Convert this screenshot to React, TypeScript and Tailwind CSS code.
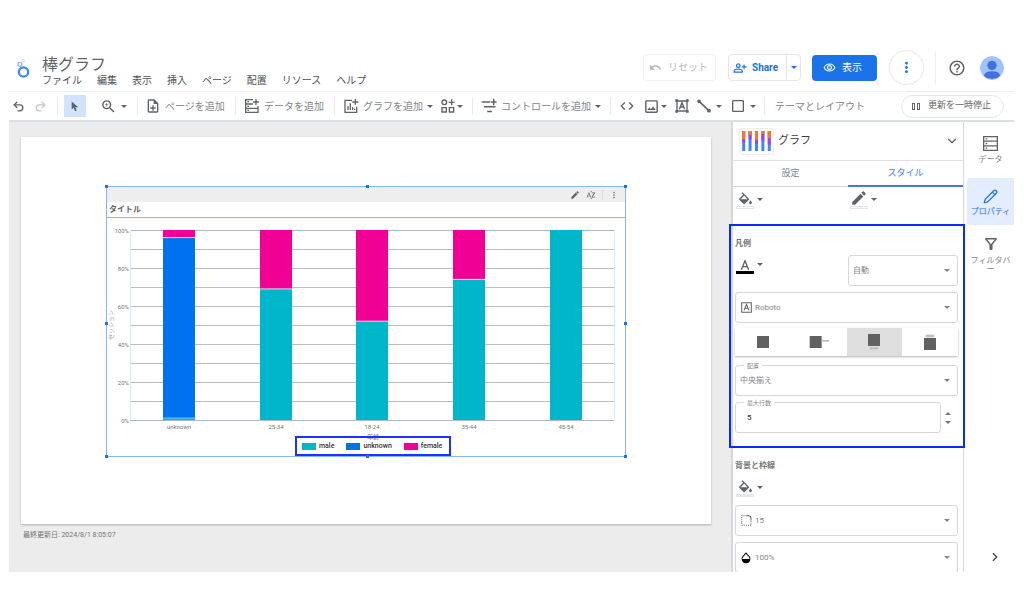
import React, { useState } from 'react';
import {
  MdCheckBoxOutlineBlank,
  MdCode,
  MdEdit,
  MdHelpOutline,
  MdMoreVert,
  MdOutlineFilterAlt,
  MdOutlineImage,
  MdOutlineNoteAdd,
  MdOutlinePersonAddAlt,
  MdOutlineRemoveRedEye,
  MdOutlineZoomIn,
  MdSortByAlpha,
  MdUndo,
} from 'react-icons/md';
import { ChevronDown, ChevronRight, Pencil, Redo2, Undo2 } from 'lucide-react';

const menus = ['ファイル', '編集', '表示', '挿入', 'ページ', '配置', 'リソース', 'ヘルプ'];

const PINK = '#f10096';
const CYAN = '#00b6cb';
const BLUE = '#0072f0';

// shares in percent, stacked from the bottom
const bars = [
  { label: 'unknown', male: 1, unknown: 95, female: 4 },
  { label: '25-34', male: 69, unknown: 0, female: 31 },
  { label: '18-24', male: 52, unknown: 0, female: 48 },
  { label: '35-44', male: 74, unknown: 0, female: 26 },
  { label: '45-54', male: 100, unknown: 0, female: 0 },
];

const Caret = () => (
  <svg viewBox="0 0 6 3" className="w-[6px] h-[3px] shrink-0 pointer-events-none" fill="currentColor">
    <path d="M0 0h6L3 3z" />
  </svg>
);

const Divider = () => <div className="w-px h-[18px] bg-[#e8eaed] shrink-0" />;

const Logo = () => (
  <svg viewBox="54 54 38 60" className="w-[13px] h-5 shrink-0" fill="none">
    <circle cx="73" cy="96" r="14" stroke="#4285f4" strokeWidth="7" />
    <circle cx="62" cy="73" r="6" stroke="#8ab4f8" strokeWidth="4" />
    <circle cx="72" cy="62" r="4" stroke="#c6dafc" strokeWidth="3" />
  </svg>
);

const DataAddIcon = () => (
  <svg viewBox="0 0 48 48" className="w-4 h-4 shrink-0" fill="none" stroke="currentColor" strokeWidth="4">
    <path d="M27 5H5v38h37V31H5M5 18h22M27 31H42V24M36 3v18M27 12h18M10 11h5M10 25h5M10 37h5" />
  </svg>
);

const ChartAddIcon = () => (
  <svg viewBox="0 0 48 48" className="w-4 h-4 shrink-0" fill="none" stroke="currentColor" strokeWidth="4">
    <path d="M27 7H6v36h35V26M37 3v17M28 12h18M15 36V24M22 36V16M29 36v-9M35 36v-4" />
  </svg>
);

const CommunityIcon = () => (
  <svg viewBox="0 0 42 42" className="w-3.5 h-3.5 shrink-0" fill="none" stroke="currentColor" strokeWidth="4">
    <circle cx="10" cy="10" r="7" />
    <path d="M32 1v18M23 10h18M3 26h13v13H3zM25 26h13v13H25z" />
  </svg>
);

const ControlAddIcon = () => (
  <svg viewBox="0 0 44 44" className="w-4 h-4 shrink-0" fill="none" stroke="currentColor" strokeWidth="4">
    <path d="M2 11h23M8 24h32M17 37h13M35 2v18M27 11h16" />
  </svg>
);

const TextBoxIcon = () => (
  <svg viewBox="0 0 42 42" className="w-3.5 h-3.5 shrink-0" fill="none" stroke="currentColor" strokeWidth="4">
    <path d="M6 6h30v30H6zM13 31l8-20 8 20M16 24h10" />
    <path fill="currentColor" stroke="none" d="M1 1h8v8H1zM33 1h8v8h-8zM1 33h8v8H1zM33 33h8v8h-8z" />
  </svg>
);

const LineIcon = () => (
  <svg viewBox="0 0 42 42" className="w-3.5 h-3.5 shrink-0" stroke="currentColor" strokeWidth="5">
    <path d="M6 7l30 28" />
    <circle cx="6" cy="7" r="3" />
    <circle cx="36" cy="35" r="3" />
  </svg>
);

const BucketIcon = () => (
  <svg viewBox="0 0 24 18" className="w-[17px] h-[13px]" fill="currentColor">
    <path d="M16.56 8.94L7.62 0 6.21 1.41l2.38 2.38-5.15 5.15a1.49 1.49 0 0 0 0 2.12l5.5 5.5c.29.29.68.44 1.06.44s.77-.15 1.06-.44l5.5-5.5c.59-.58.59-1.53 0-2.12zM5.21 10L10 5.21 14.79 10H5.21zM19 11.5s-2 2.17-2 3.5c0 1.1.9 2 2 2s2-.9 2-2c0-1.33-2-3.5-2-3.5z" />
  </svg>
);

const FontIcon = () => (
  <svg viewBox="0 0 32 32" className="w-[11px] h-[11px] shrink-0" fill="none" stroke="currentColor" strokeWidth="3">
    <path d="M2 2h28v28H2z" />
    <path d="M9 24l7-17 7 17M12 18h8" />
  </svg>
);

const CornerIcon = () => (
  <svg viewBox="0 0 32 32" className="w-[11px] h-[11px] shrink-0" fill="none" stroke="currentColor" strokeWidth="3">
    <path d="M16 2h6q7 0 7 8v6" />
    <path strokeDasharray="3 3" d="M16 2H2v28h27V16" />
  </svg>
);

const OpacityIcon = () => (
  <svg viewBox="0 0 28 34" className="w-[10px] h-3 shrink-0 text-black">
    <path d="M14 3l8 9a11 11 0 1 1-16 0z" fill="none" stroke="currentColor" strokeWidth="3" />
    <path d="M3 20h22a11 11 0 0 1-22 0z" fill="currentColor" />
  </svg>
);

const DataIcon = () => (
  <svg viewBox="0 0 46 46" className="w-[15px] h-[15px]" fill="none" stroke="currentColor" strokeWidth="4">
    <path d="M2 2h42v42H2zM2 16h42M2 30h42M8 9h5M8 23h5M8 37h5" />
  </svg>
);

const ThumbIcon = () => {
  const splits = [
    [24, 34],
    [11, 26],
    [26, 39],
    [9, 29],
    [21, 41],
  ];
  return (
    <svg viewBox="0 0 86 60" className="w-[29px] h-5">
      {splits.map(([a, b], i) => (
        <g key={i}>
          <rect x={i * 19.2} width="9" height="60" fill="#4285f4" />
          <rect x={i * 19.2} width="9" height={b} fill="#a142f4" />
          <rect x={i * 19.2} width="9" height={a} fill="#fa7b17" />
        </g>
      ))}
    </svg>
  );
};

const Header = () => (
  <header className="flex h-12 shrink-0 border-b border-[#eceef0] pr-2.5">
    <div className="pl-2 pt-3.5">
      <Logo />
    </div>
    <div className="pl-3 pt-[11px] flex-1">
      <h1 className="text-base leading-5 text-[#5f6368]">棒グラフ</h1>
      <nav className="flex gap-[15px] text-[10px] leading-3 text-[#4d5156]">
        {menus.map((m) => (
          <button key={m}>{m}</button>
        ))}
      </nav>
    </div>
    <div className="flex items-center text-[10px]">
      <button className="flex items-center w-[73px] h-[27px] pl-[5px] gap-1.5 border border-[#eef0f2] rounded-sm text-[#b4b7ba]">
        <MdUndo size={13} />
        リセット
      </button>
      <div className="flex items-center ml-3 w-[73px] h-[27px] border border-[#e4e7ea] rounded-sm text-[#1a73e8]">
        <button className="flex items-center h-full gap-[5px] pl-1 w-[57px] font-bold">
          <MdOutlinePersonAddAlt size={14} />
          Share
        </button>
        <button aria-label="共有オプション" className="flex items-center justify-center h-full flex-1 border-l border-[#e4e7ea]">
          <Caret />
        </button>
      </div>
      <button className="flex items-center ml-[11px] w-[65px] h-[26px] pl-[11px] gap-1.5 rounded-sm bg-[#1a73e8] text-white">
        <MdOutlineRemoveRedEye size={13} />
        表示
      </button>
      <button aria-label="その他" className="flex items-center justify-center ml-3 w-[35px] h-[35px] rounded-full border border-[#e4e7ea] text-[#1a73e8]">
        <MdMoreVert size={17} />
      </button>
      <div className="ml-[11px] w-px h-8 bg-[#eceef0]" />
      <button aria-label="ヘルプ" className="ml-3 text-[#5f6368]">
        <MdHelpOutline size={18} />
      </button>
      <svg viewBox="0 0 72 72" className="ml-3.5 w-6 h-6 rounded-full">
        <circle cx="36" cy="36" r="36" fill="#a0c3ff" />
        <circle cx="36" cy="28" r="14" fill="#4071dd" />
        <path d="M12 60q0-14 24-14t24 14q-10 9-24 9t-24-9z" fill="#4071dd" />
      </svg>
    </div>
  </header>
);

const Toolbar = () => (
  <div className="flex items-center h-[30px] shrink-0 border-b-2 border-[#dadfe2] pr-2.5 text-[10px] text-[#5f6368] whitespace-nowrap">
    <div className="flex w-12 items-center">
      <button aria-label="元に戻す" className="w-[18px] flex justify-center">
        <Undo2 size={13} strokeWidth={2.5} />
      </button>
      <button aria-label="やり直し" className="w-[26px] flex justify-center text-[#c4c7ca]">
        <Redo2 size={13} strokeWidth={2.5} />
      </button>
    </div>
    <Divider />
    <div className="px-1.5">
      <button aria-label="選択" className="flex items-center justify-center w-[22px] h-[22px] bg-[#d2e3fc]">
        <svg viewBox="0 0 24 32" className="w-[8px] h-[11px]" fill="currentColor">
          <path d="M2 1v24l6-5 4 10 5-2-4-10h9z" />
        </svg>
      </button>
    </div>
    <button aria-label="ズーム" className="flex items-center w-[45px] pl-2 gap-1">
      <MdOutlineZoomIn size={17} />
      <Caret />
    </button>
    <Divider />
    <button className="flex items-center w-[97px] pl-[7px] gap-1 text-[#80868b]">
      <MdOutlineNoteAdd size={16} className="text-[#5f6368]" />
      ページを追加
    </button>
    <Divider />
    <button className="flex items-center w-[98px] pl-2 gap-1 text-[#80868b]">
      <span className="text-[#5f6368]">
        <DataAddIcon />
      </span>
      データを追加
    </button>
    <Divider />
    <div className="flex items-center w-[137px] pl-2 gap-2">
      <button className="flex items-center gap-1">
        <ChartAddIcon />
        <span className="text-[#80868b]">グラフを追加</span>
        <Caret />
      </button>
      <button aria-label="コミュニティ ビジュアリゼーション" className="flex items-center gap-0.5">
        <CommunityIcon />
        <Caret />
      </button>
    </div>
    <Divider />
    <button className="flex items-center w-[137px] pl-2 gap-1">
      <ControlAddIcon />
      <span className="text-[#80868b]">コントロールを追加</span>
      <Caret />
    </button>
    <Divider />
    <div className="flex items-center w-[153px] pl-2 gap-2">
      <button aria-label="URL の埋め込み">
        <MdCode size={16} />
      </button>
      <button aria-label="画像" className="flex items-center gap-px">
        <MdOutlineImage size={17} />
        <Caret />
      </button>
      <button aria-label="テキスト">
        <TextBoxIcon />
      </button>
      <button aria-label="線" className="flex items-center gap-[5px]">
        <LineIcon />
        <Caret />
      </button>
      <button aria-label="図形" className="flex items-center gap-1">
        <MdCheckBoxOutlineBlank size={16} />
        <Caret />
      </button>
    </div>
    <Divider />
    <button className="pl-2.5 text-[#80868b]">テーマとレイアウト</button>
    <button className="flex items-center ml-auto h-[23px] pl-[10px] pr-3 gap-2 border border-[#e4e7ea] rounded-full text-[9px]">
      <span className="flex gap-0.5">
        <span className="w-[3px] h-[7px] border border-current" />
        <span className="w-[3px] h-[7px] border border-current" />
      </span>
      更新を一時停止
    </button>
  </div>
);

const Plot = () => (
  <svg viewBox="1 0 518 238" className="block w-full" fontSize="6" fill="#777">
    {Array.from({ length: 11 }, (_, i) => (
      <path key={i} d={`M24 ${12.5 + i * 19}H508`} stroke={i % 10 === 0 ? '#a9b8cf' : '#bdbdbd'} />
    ))}
    <path d="M24.5 12V202M508.5 12V202" stroke="#dbe7fb" />
    {[100, 80, 60, 40, 20, 0].map((v, i) => (
      <text key={v} x="23" y={14.5 + i * 38} textAnchor="end">
        {v}%
      </text>
    ))}
    {bars.map((b, i) => {
      const x = 57 + Math.round(i * 96.7);
      const top = 12 + b.female * 1.9;
      const mid = top + b.unknown * 1.9;
      return (
        <g key={b.label}>
          <rect x={x} y="12" width="32" height="190" fill={CYAN} />
          <rect x={x} y="12" width="32" height={mid - 12} fill={BLUE} />
          <rect x={x} y="12" width="32" height={top - 12} fill={PINK} />
          {b.female > 0 && <path d={`M${x} ${top}h32`} stroke="#f1d3ea" />}
          {b.unknown > 0 && <path d={`M${x} ${mid}h32`} stroke="#7fc4ee" />}
          <text x={x + 16} y="211" textAnchor="middle">
            {b.label}
          </text>
        </g>
      );
    })}
    <text transform="translate(7 107) rotate(-90)" textAnchor="middle" fill="#999">
      セッション
    </text>
    <text x="267" y="221" textAnchor="middle">
      年齢
    </text>
  </svg>
);

const handles = [
  'left-[-2px] top-[-2px]',
  'left-1/2 top-[-2px]',
  'right-[-2px] top-[-2px]',
  'left-[-2px] top-1/2',
  'right-[-2px] top-1/2',
  'left-[-2px] bottom-[-2px]',
  'left-1/2 bottom-[-2px]',
  'right-[-2px] bottom-[-2px]',
];

const legend = [
  { name: 'male', color: 'bg-[#00b6cb]' },
  { name: 'unknown', color: 'bg-[#0072f0]' },
  { name: 'female', color: 'bg-[#f10096]' },
];

const ChartCard = () => (
  <div className="relative border border-[#8ab4f8]">
    <div className="flex items-center justify-end h-[15px] pr-1.5 bg-[#eeeeee] text-[#5f6368]">
      <MdEdit size={10} />
      <MdSortByAlpha size={10} className="ml-1.5" />
      <div className="ml-1.5 mr-1.5 w-px h-2.5 bg-[#dddddd]" />
      <MdMoreVert size={10} />
    </div>
    <h2 className="h-4 pl-0.5 text-[8px] leading-4 font-bold text-[#5f6368] border-b border-[#8ab4f8]">タイトル</h2>
    <Plot />
    <ul className="absolute bottom-0 left-[188px] flex items-center gap-3 h-5 pl-[5px] pr-[7px] border-2 border-[#1a33ff] text-[7px] font-medium text-[#333]">
      {legend.map((l) => (
        <li key={l.name} className="flex items-center gap-[3px]">
          <span className={`w-3.5 h-[7px] ${l.color}`} />
          {l.name}
        </li>
      ))}
    </ul>
    {handles.map((h) => (
      <span key={h} className={`absolute w-[3px] h-[3px] bg-[#1a73e8] ${h}`} />
    ))}
  </div>
);

type FieldProps = {
  label: string;
  value: string;
  icon?: React.ReactNode;
  floating?: boolean;
  className?: string;
};

const Field = ({ label, value, icon, floating, className = '' }: FieldProps) => (
  <label className={`relative flex items-center h-[31px] pl-1 pr-[7px] border border-[#d5d7da] rounded-[3px] text-[8px] text-[#80868b] ${className}`}>
    {floating && <span className="absolute -top-[5px] left-2 px-[3px] bg-white text-[6px] leading-[9px]">{label}</span>}
    {icon && <span className="w-[15px] flex pl-px text-[#5f6368]">{icon}</span>}
    <select aria-label={label} defaultValue={value} className="flex-1 min-w-0 appearance-none bg-transparent">
      <option>{value}</option>
    </select>
    <Caret />
  </label>
);

const ColorButton = ({ label, children, bar }: { label: string; children: React.ReactNode; bar: string }) => (
  <button aria-label={label} className="flex items-start gap-[3px] pl-px text-[#5f6368]">
    <span className="flex flex-col items-center w-[18px]">
      <span className="flex items-center justify-center h-4">{children}</span>
      <span className={`w-[18px] h-[3px] ${bar}`} />
    </span>
    <span className="pt-2">
      <Caret />
    </span>
  </button>
);

const positions = [
  { id: 'なし', shape: <rect x="12" y="12" width="36" height="36" /> },
  {
    id: '右',
    shape: (
      <>
        <rect x="2" y="12" width="36" height="36" />
        <rect x="38" y="24" width="22" height="5" fill="#bdbdbd" />
      </>
    ),
  },
  {
    id: '下',
    shape: (
      <>
        <rect x="12" y="6" width="36" height="36" />
        <rect x="17" y="46" width="26" height="6" fill="#bdbdbd" />
      </>
    ),
  },
  {
    id: '上',
    shape: (
      <>
        <rect x="12" y="18" width="36" height="36" />
        <rect x="17" y="8" width="26" height="8" fill="#bdbdbd" />
      </>
    ),
  },
];

const StylePanel = () => {
  const [position, setPosition] = useState('下');

  return (
    <aside className="w-[233px] shrink-0 bg-white border-l-2 border-r border-[#d5d8dc]">
      <div className="flex items-center h-[39px] pl-1.5 pr-1 border-b border-[#e0e0e0] text-[#5f6368]">
        <span className="flex items-center justify-center w-[35px] h-[27px] border border-[#eceef0] rounded-[3px]">
          <ThumbIcon />
        </span>
        <h2 className="flex-1 pl-1 text-[11px] text-[#3c4043]">グラフ</h2>
        <ChevronDown size={14} />
      </div>
      <div className="grid grid-cols-2 h-[26px] text-[9px]">
        <button className="border-b border-[#d5d8dc] text-[#80868b]">設定</button>
        <button className="pt-px border-b-2 border-[#4a78d8] text-[#3b78e7]">スタイル</button>
      </div>
      <div className="grid grid-cols-2 h-[37px] pt-[3px] pl-0.5">
        <ColorButton label="背景色" bar="border border-[#e4e4e4]">
          <BucketIcon />
        </ColorButton>
        <ColorButton label="枠線の色" bar="border border-[#e4e4e4]">
          <MdEdit size={18} />
        </ColorButton>
      </div>

      <section className="relative z-10 -ml-1 -mr-0.5 pt-[10px] pb-[13px] pl-1 pr-[5px] border-2 border-[#0a2bff]">
        <h3 className="text-[8px] leading-4 font-bold text-[#757575]">凡例</h3>
        <div className="flex items-start justify-between mt-[3px]">
          <ColorButton label="文字色" bar="bg-black">
            <svg viewBox="0 0 30 30" className="w-[10px] h-[10px] mt-1" fill="none" stroke="currentColor" strokeWidth="4">
              <path d="M4 29L15 2l11 27M8 20h14" />
            </svg>
          </ColorButton>
          <Field label="文字サイズ" value="自動" className="w-[110px]" />
        </div>
        <Field label="フォント" value="Roboto" icon={<FontIcon />} className="mt-1.5" />
        <div className="grid grid-cols-4 h-7 mt-[5px] shadow-[0_1px_2px_rgba(0,0,0,0.3)]">
          {positions.map((p) => (
            <button
              key={p.id}
              aria-label={p.id}
              aria-pressed={position === p.id}
              onClick={() => setPosition(p.id)}
              className={`flex items-center justify-center ${position === p.id ? 'bg-[#dedede]' : ''}`}
            >
              <svg viewBox="0 0 60 60" className="w-5 h-5" fill="#616161">
                {p.shape}
              </svg>
            </button>
          ))}
        </div>
        <Field label="配置" value="中央揃え" floating className="mt-[9px]" />
        <div className="flex items-center mt-1.5">
          <label className="relative flex items-center flex-1 h-[31px] px-[11px] border border-[#d5d7da] rounded-[3px] text-[#80868b]">
            <span className="absolute -top-[5px] left-2 px-[3px] bg-white text-[6px] leading-[9px]">最大行数</span>
            <input defaultValue="5" inputMode="numeric" className="w-full text-[8px] font-medium text-[#3c4043] outline-none" />
          </label>
          <div className="flex flex-col items-center gap-1.5 w-[17px] pr-[3px] text-[#757575]">
            <button aria-label="増やす" className="rotate-180">
              <Caret />
            </button>
            <button aria-label="減らす">
              <Caret />
            </button>
          </div>
        </div>
      </section>

      <section className="pt-2.5 pl-0.5 pr-[5px]">
        <h3 className="text-[8px] leading-4 font-bold text-[#757575]">背景と枠線</h3>
        <div className="mt-1 mb-2">
          <ColorButton label="背景" bar="bg-[#e8e8e8]">
            <BucketIcon />
          </ColorButton>
        </div>
        <Field label="枠線の半径" value="15" icon={<CornerIcon />} />
        <Field label="不透明度" value="100%" icon={<OpacityIcon />} className="mt-1.5" />
      </section>
    </aside>
  );
};

const Rail = () => (
  <nav className="flex flex-col w-[50px] shrink-0 pl-[3px] bg-white text-[8px] leading-[9px] text-[#80868b] whitespace-nowrap">
    <button className="flex flex-col items-center h-14 pt-[14px] gap-1">
      <span className="text-[#5f6368]">
        <DataIcon />
      </span>
      データ
    </button>
    <button className="flex flex-col items-center h-[47px] pt-[11px] gap-[3px] rounded-l-[3px] bg-[#e4edfd] text-[#1a73e8]">
      <Pencil size={15} />
      プロパティ
    </button>
    <button className="flex flex-col items-center pt-[10px] gap-[3px]">
      <MdOutlineFilterAlt size={18} className="text-[#5f6368]" />
      <span>
        フィルタバ
        <br />ー
      </span>
    </button>
    <button aria-label="閉じる" className="flex justify-center mt-auto pb-2 pl-2 text-[#3c4043]">
      <ChevronRight size={14} />
    </button>
  </nav>
);

const App = () => {
  return (
    <div className="flex flex-col h-screen pt-11 pb-[42px] pl-[9px] pr-2.5 bg-white font-['Roboto','Noto_Sans_CJK_JP',sans-serif]">
      <Header />
      <Toolbar />
      <div className="flex flex-1 min-h-0 overflow-hidden">
        <main className="flex flex-col flex-1 min-w-0 pt-[15px] pl-3 pr-5 bg-[#ececec]">
          <div className="flex-1 px-[85px] pt-[49px] bg-white shadow-[0_1px_2px_rgba(0,0,0,0.25)]">
            <ChartCard />
          </div>
          <p className="h-12 pt-[5px] pl-0.5 text-[7px] leading-3 text-[#757575]">最終更新日: 2024/8/1 8:05:07</p>
        </main>
        <StylePanel />
        <Rail />
      </div>
    </div>
  );
};

export default App;
